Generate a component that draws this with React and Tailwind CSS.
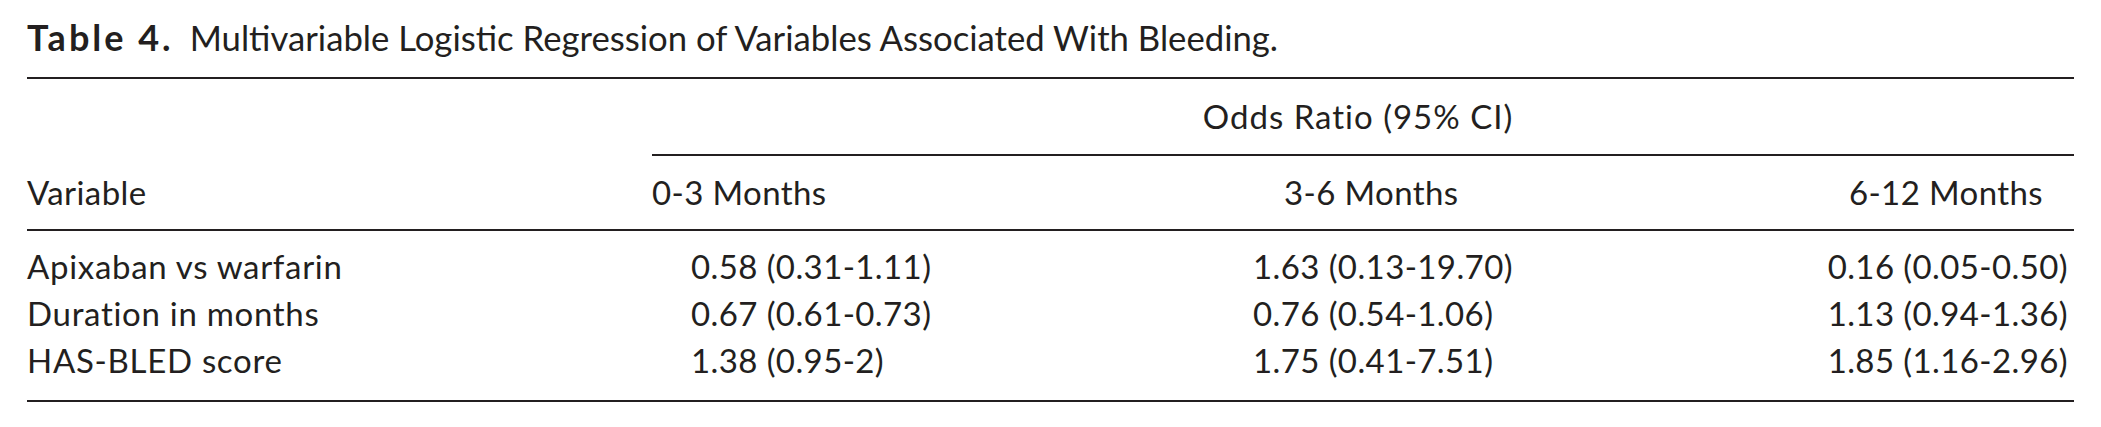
import React from "react";

const rows = [
  ["Apixaban vs warfarin", "0.58 (0.31-1.11)", "1.63 (0.13-19.70)", "0.16 (0.05-0.50)"],
  ["Duration in months", "0.67 (0.61-0.73)", "0.76 (0.54-1.06)", "1.13 (0.94-1.36)"],
  ["HAS-BLED score", "1.38 (0.95-2)", "1.75 (0.41-7.51)", "1.85 (1.16-2.96)"],
];

const cols = "grid grid-cols-[625px_548px_560px_1fr]";

const App = () => {
  return (
    <div
      className="w-[2101px] h-[427px] bg-white px-[27px] text-[#231f20]"
      style={{ fontFamily: "Lato, 'Open Sans', sans-serif" }}
    >
      {/* Caption */}
      <div className="h-[77px] pt-[20px] text-[34.7px] leading-[35px] whitespace-nowrap">
        <span className="font-bold text-[36px] tracking-[3px]">Table 4.</span>
        <span className="ml-[16px]">
          Multivariable Logistic Regression of Variables Associated With Bleeding.
        </span>
      </div>
      <div className="h-[2px] bg-[#231f20]" />

      {/* Spanning header */}
      <div className="ml-[625px] h-[75px] pt-[21px] pr-[10px] text-[33px] leading-[33px] tracking-[1px] text-center">
        Odds Ratio (95% CI)
      </div>
      <div className="ml-[625px] h-[2px] bg-[#231f20]" />

      {/* Column headers */}
      <div className={`${cols} h-[73px] pt-[20px] text-[33px] leading-[33px] tracking-[0.4px]`}>
        <div>Variable</div>
        <div>0-3 Months</div>
        <div className="pl-[84px]">3-6 Months</div>
        <div className="text-right pr-[31px]">6-12 Months</div>
      </div>
      <div className="h-[2px] bg-[#231f20]" />

      {/* Body */}
      <div className="pt-[12px] pb-[16px]">
        {rows.map((r) => (
          <div
            key={r[0]}
            className={`${cols} h-[47px] text-[33px] leading-[47px] tracking-[0.4px] whitespace-nowrap`}
          >
            <div className="tracking-[0.7px]">{r[0]}</div>
            <div className="pl-[39px]">{r[1]}</div>
            <div className="pl-[53px]">{r[2]}</div>
            <div className="text-right pr-[6px]">{r[3]}</div>
          </div>
        ))}
      </div>
      <div className="h-[2px] bg-[#231f20]" />
    </div>
  );
};

export default App;
